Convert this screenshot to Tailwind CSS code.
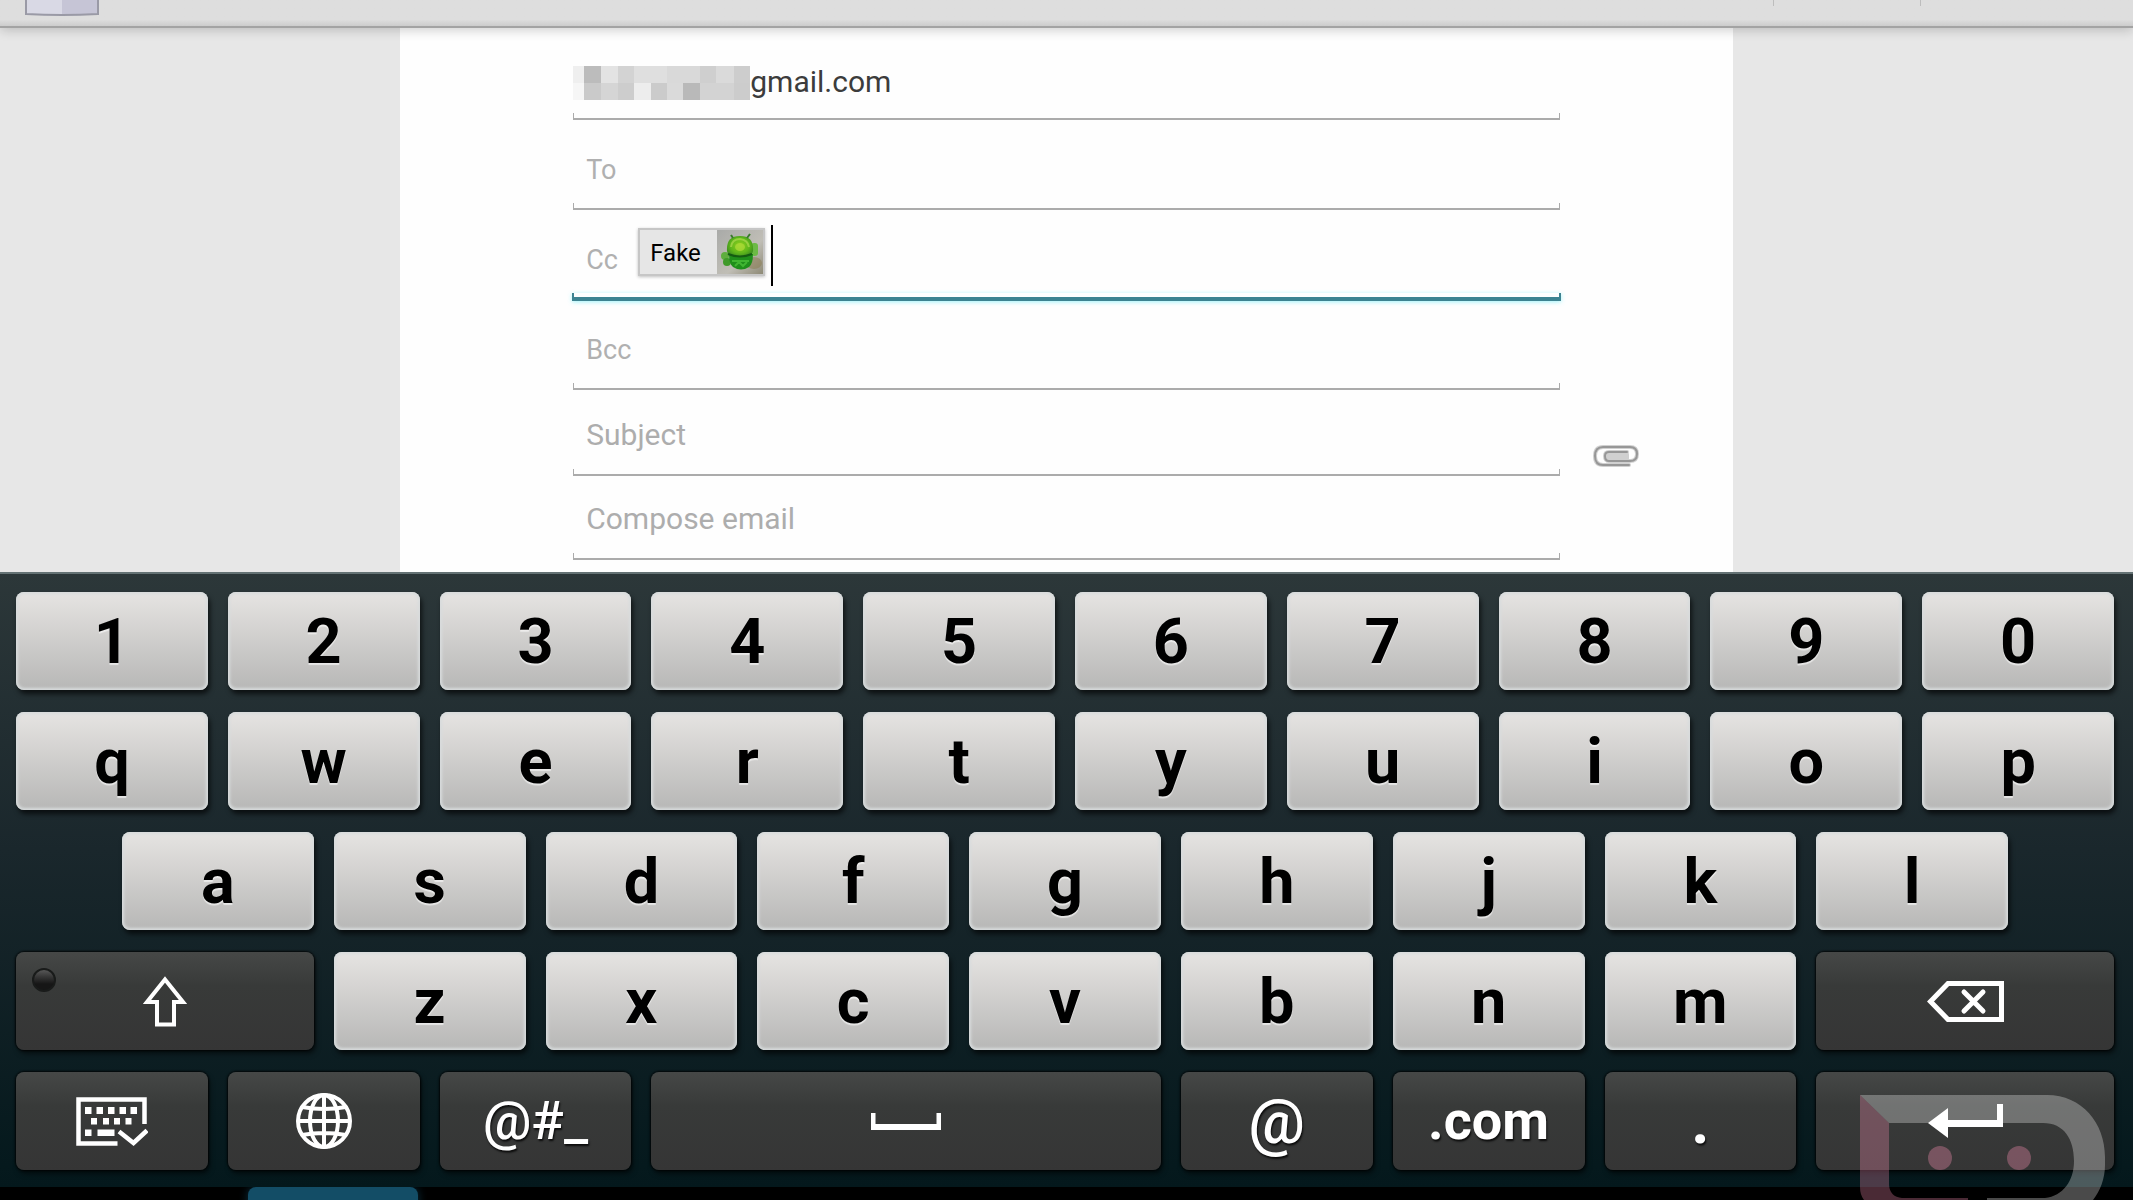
<!DOCTYPE html>
<html lang="en">
  <head>
    <meta charset="UTF-8" />
    <meta name="viewport" content="width=device-width, initial-scale=1.0" />
    <title>Compose</title>
    <script src="https://cdn.jsdelivr.net/npm/@tailwindcss/browser@4"></script>
  </head>
  <body class="relative flex min-h-screen flex-col overflow-hidden bg-black font-['Roboto','Liberation_Sans',sans-serif]">
    <!-- Action bar -->
    <header class="relative z-10 flex h-7 items-start justify-between border-b-2 border-[#a3a3a3] bg-linear-to-b from-[#dedede] from-75% to-[#cccccc] shadow-[0_2px_12px_rgba(0,0,0,0.2)]">
      <svg class="ml-6 h-4 w-19" viewBox="0 0 76 16" aria-hidden="true">
        <path d="M1 0H75V14Q38 17 1 14Z" fill="#d9d9e5" />
        <path d="M38 0H74V14Q56 15 38 15Z" fill="#c6c5d6" />
        <path d="M2 0V14Q38 16 74 14V0" fill="none" stroke="#9a9aa6" stroke-width="2" />
      </svg>
      <div class="mr-[212px] h-1.5 w-[148px] border-x border-[#bdbdbd]"></div>
    </header>

    <!-- Compose form -->
    <main class="bg-[#e7e7e7]">
      <form class="mx-auto w-5/8 bg-[#fefefe] pb-3">
        <div class="grid h-[92px] grid-cols-[13%_1fr_13%]">
          <div class="relative col-start-2 flex items-end pb-5">
            <svg class="h-[34px] w-[177px] shrink-0" viewBox="0 0 178 34" preserveAspectRatio="none" shape-rendering="crispEdges" aria-hidden="true">
              <rect width="11" height="17" fill="#efefef" />
              <rect x="11" width="17" height="17" fill="#bcbcbc" />
              <rect x="28" width="17" height="17" fill="#e3e3e3" />
              <rect x="45" width="16" height="17" fill="#d3d3d3" />
              <rect x="61" width="34" height="17" fill="#dfdfdf" />
              <rect x="95" width="33" height="17" fill="#d9d9d9" />
              <rect x="128" width="16" height="17" fill="#cfcfcf" />
              <rect x="144" width="18" height="17" fill="#dadada" />
              <rect x="162" width="16" height="17" fill="#cdcdcd" />
              <rect y="17" width="11" height="17" fill="#f6f6f6" />
              <rect x="11" y="17" width="17" height="17" fill="#cacaca" />
              <rect x="28" y="17" width="17" height="17" fill="#d5d5d5" />
              <rect x="45" y="17" width="16" height="17" fill="#cdcdcd" />
              <rect x="61" y="17" width="17" height="17" fill="#ededed" />
              <rect x="78" y="17" width="17" height="17" fill="#cbcbcb" />
              <rect x="95" y="17" width="16" height="17" fill="#dadada" />
              <rect x="111" y="17" width="17" height="17" fill="#b9b9b9" />
              <rect x="128" y="17" width="34" height="17" fill="#d3d3d3" />
              <rect x="162" y="17" width="16" height="17" fill="#cccccc" />
            </svg>
            <input type="text" aria-label="From" value="gmail.com" class="h-9 min-w-0 flex-1 pb-0.5 text-[30px] text-[#3c3c3c] outline-none" />
            <span class="absolute inset-x-0 bottom-0 h-[7px] border-x border-b-2 border-[#ababab]"></span>
          </div>
        </div>
        <div class="grid h-[90px] grid-cols-[13%_1fr_13%]">
          <div class="relative col-start-2 flex items-end gap-5 pb-6 pl-[13px]">
            <label for="to" class="text-[27px] leading-8 text-[#b0b0b0]">To</label>
            <input id="to" type="text" class="h-8 min-w-0 flex-1 text-[27px] outline-none" />
            <span class="absolute inset-x-0 bottom-0 h-[7px] border-x border-b-2 border-[#ababab]"></span>
          </div>
        </div>
        <div class="grid h-[90px] grid-cols-[13%_1fr_13%]">
          <div class="relative col-start-2 flex items-end pb-6 pl-[13px]">
            <label for="cc" class="w-[52px] text-[27px] leading-8 text-[#b0b0b0]">Cc</label>
            <div class="flex h-12 shrink-0 items-stretch border-2 border-[#c6c6c6] bg-[#e6e6e6] shadow-[0_1px_3px_rgba(0,0,0,0.25)]">
              <span class="w-[77px] pl-2.5 text-2xl leading-[47px] text-black">Fake</span>
              <svg class="w-[46px]" viewBox="0 0 46 44" aria-hidden="true">
                <defs>
                  <linearGradient id="wall" x1="0" y1="0" x2="1" y2="1">
                    <stop offset="0" stop-color="#a9aaa8" />
                    <stop offset="0.6" stop-color="#c0beb6" />
                    <stop offset="1" stop-color="#8e8a76" />
                  </linearGradient>
                  <radialGradient id="head" cx="0.5" cy="0.45" r="0.6">
                    <stop offset="0" stop-color="#8fd01f" />
                    <stop offset="0.6" stop-color="#5fb71b" />
                    <stop offset="1" stop-color="#37881f" />
                  </radialGradient>
                </defs>
                <rect width="46" height="44" fill="url(#wall)" />
                <ellipse cx="37" cy="33" rx="8" ry="6" fill="#8a7b50" opacity="0.5" />
                <rect x="4" y="22" width="8" height="8" rx="4" fill="#5fae3f" />
                <rect x="6" y="28" width="8" height="8" rx="4" fill="#3f9a2a" />
                <rect x="34" y="13" width="7" height="13" rx="3" fill="#6cba45" />
                <path d="M12 24H36Q36 34 32 37Q24 42 16 37Q12 34 12 24Z" fill="#1f8f1b" />
                <path d="M10 21Q9 6 23 6Q37 6 36 21Q35 27 23 27Q11 27 10 21Z" fill="url(#head)" />
                <path d="M16 8L14 5M30 8L33 4" stroke="#3a7d2c" stroke-width="2" />
                <path d="M11 24Q23 29 35 24" fill="none" stroke="#145c12" stroke-width="2" />
                <path d="M14 17Q15 9 23 9Q31 10 32 17" fill="none" stroke="#b9e05a" stroke-width="2" opacity="0.6" />
                <ellipse cx="23" cy="17" rx="5" ry="4" fill="#b0dc3a" opacity="0.7" />
                <path d="M15 31H32M18 36L22 32L26 36L30 32" fill="none" stroke="#4fc43c" stroke-width="2" opacity="0.7" />
              </svg>
            </div>
            <span class="-mb-2.5 ml-1.5 h-[61px] w-0.5 shrink-0 bg-black"></span>
            <input id="cc" type="text" class="h-8 min-w-0 flex-1 text-2xl outline-none" />
            <span class="absolute -inset-x-px -bottom-px h-2 border-x-2 border-b-4 border-[#3d8391] shadow-[0_1px_4px_rgba(120,240,250,0.7)]"></span>
          </div>
        </div>
        <div class="grid h-[90px] grid-cols-[13%_1fr_13%]">
          <div class="relative col-start-2 flex items-end gap-5 pb-6 pl-[13px]">
            <label for="bcc" class="text-[27px] leading-8 text-[#b0b0b0]">Bcc</label>
            <input id="bcc" type="text" class="h-8 min-w-0 flex-1 text-[27px] outline-none" />
            <span class="absolute inset-x-0 bottom-0 h-[7px] border-x border-b-2 border-[#ababab]"></span>
          </div>
        </div>
        <div class="grid h-[86px] grid-cols-[13%_1fr_13%] items-end">
          <div class="relative col-start-2 flex pb-6 pl-[13px]">
            <input type="text" aria-label="Subject" placeholder="Subject" class="h-9 min-w-0 flex-1 text-[30px] outline-none placeholder:text-[#adadad]" />
            <span class="absolute inset-x-0 bottom-0 h-[7px] border-x border-b-2 border-[#ababab]"></span>
          </div>
          <button type="button" aria-label="Attach file" class="justify-self-start pb-2 pl-8">
            <svg class="h-6 w-12" viewBox="0 0 48 24" fill="none" stroke-linecap="round">
              <rect x="13" y="8" width="24" height="9" rx="3" fill="#d0d0d0" />
              <path d="M37 21H11Q3 21 3 12Q3 3 11 3H38Q45 3 45 10Q45 17 38 17H17Q13 17 13 12Q13 8 17 8H35" stroke="#d0d0d0" stroke-width="4" />
              <path d="M37 21H11Q3 21 3 12Q3 3 11 3H38Q45 3 45 10Q45 17 38 17H17Q13 17 13 12Q13 8 17 8H35" stroke="#979797" stroke-width="2" />
            </svg>
          </button>
        </div>
        <div class="grid h-[84px] grid-cols-[13%_1fr_13%] items-end">
          <div class="relative col-start-2 flex pb-6 pl-[13px]">
            <input type="text" aria-label="Compose email" placeholder="Compose email" class="h-9 min-w-0 flex-1 text-[30px] outline-none placeholder:text-[#adadad]" />
            <span class="absolute inset-x-0 bottom-0 h-[7px] border-x border-b-2 border-[#ababab]"></span>
          </div>
        </div>
      </form>
    </main>

    <!-- On-screen keyboard -->
    <section id="keyboard" aria-label="Keyboard" class="grid grid-cols-20 gap-x-5 gap-y-[22px] border-t-2 border-[#647274] bg-linear-to-b from-[#2c3739] via-[#1a272c] via-45% to-[#04181c] pt-[18px] pr-[19px] pb-[17px] pl-4"></section>

    <!-- System bar -->
    <footer class="h-[13px] overflow-hidden">
      <div class="ml-[248px] h-10 w-[170px] rounded-t-lg bg-[#134d66] shadow-[0_0_10px_rgba(19,77,102,0.6)]"></div>
    </footer>

    <!-- Watermark -->
    <svg class="pointer-events-none absolute right-7 bottom-0 h-[105px] w-[245px]" viewBox="0 0 245 105" fill-opacity="0.29" aria-hidden="true">
      <path fill="#ffffff" d="M0 0H187C222 0 245 28 245 62V70C245 84 240 96 233 105H127V103H185C203 101 214 86 214 66C214 44 204 28 183 28H29Z" />
      <path fill="#ff92b5" d="M0 0L29 28V90Q30 102 42 103H108V105H4Q0 100 0 92Z" />
      <circle cx="80" cy="63" r="12" fill="#ff92b5" fill-opacity="0.33" />
      <circle cx="159" cy="63" r="12" fill="#ff92b5" fill-opacity="0.33" />
    </svg>

    <script>
      const lightKey =
        "flex h-[98px] items-center justify-center rounded-lg bg-linear-to-b from-[#e6e4e2] to-[#b7b7b6] text-[63px] leading-none font-bold text-black shadow-[inset_0_0_3px_2px_#d8dcdd,2px_4px_5px_rgba(0,0,0,0.65)] text-shadow-[0_2px_1px_rgba(255,255,255,0.6)]";
      const darkKey =
        "relative flex h-[98px] items-center justify-center rounded-lg bg-linear-to-b from-[#464847] via-[#383a39] via-35% to-[#353535] leading-none text-white shadow-[0_0_2px_1px_rgba(0,0,0,0.8),2px_4px_5px_rgba(0,0,0,0.5)] text-shadow-[1px_2px_2px_rgba(0,0,0,0.8)]";

      const icons = {
        shift: `<svg class="h-[51px] w-11" viewBox="0 0 44 51" fill="none" stroke="#fff" stroke-width="4"><path d="M22 3.5L40 26H31V48.5H14V26H4Z"/></svg>
          <span class="absolute top-4 left-4 size-6 rounded-full border-2 border-[#191b1a] bg-linear-to-b from-[#585858] to-[#161616] to-70%"></span>`,
        hide: `<svg class="h-[49px] w-[72px]" viewBox="0 0 72 49" fill="none" stroke="#fff" stroke-width="4.5"><path d="M68.5 27V2.5H2.5V46.5H41.5M43 34.5L57.5 46L71 33.5"/>
          <path stroke="none" fill="#fff" d="M9 10h6.5v7H9zM20.5 10H27v7h-6.5zM32 10h6.5v7H32zM43.5 10H50v7h-6.5zM54.5 10H61v7h-6.5zM15 21h6v6.5h-6zM27 21h6v6.5h-6zM38 21h6v6.5h-6zM49.5 21h6v6.5h-6zM9 32.5h6.5V39H9zM21.5 32.5h17V39h-17z"/></svg>`,
        globe: `<svg class="size-14" viewBox="0 0 56 56" fill="none" stroke="#fff" stroke-width="4"><circle cx="28" cy="28" r="26"/><ellipse cx="28" cy="28" rx="14" ry="26"/><path d="M28 2V54M2 28H54M6 14Q28 18 50 14M6 42Q28 38 50 42"/></svg>`,
        space: `<svg class="h-[17px] w-[70px]" viewBox="0 0 70 17" fill="#fff"><path d="M0 0H4.5V11H65.5V0H70V17H0Z"/></svg>`,
        back: `<svg class="h-[41px] w-[77px]" viewBox="0 0 77 41" fill="none" stroke="#fff" stroke-width="5"><path d="M74.5 2.5H21L3.5 20.5L21 38.5H74.5Z"/><path d="M37 11L56 30M56 11L37 30" stroke-linecap="round"/></svg>`,
        enter: `<svg class="h-[34px] w-[75px]" viewBox="0 0 75 34" fill="#fff"><path d="M0 19L20 4V16H69V0H75V23H20V34Z"/></svg>`,
      };

      const keyboard = document.getElementById("keyboard");

      function addKey(html, classes, label) {
        const key = document.createElement("button");
        key.type = "button";
        key.className = classes;
        key.innerHTML = html;
        if (label) key.setAttribute("aria-label", label);
        keyboard.appendChild(key);
      }

      for (const c of "1234567890qwertyuiop") addKey(c, lightKey + " col-span-2");
      // home row is indented by half a key
      addKey("a", lightKey + " col-start-2 col-end-4");
      for (const c of "sdfghjkl") addKey(c, lightKey + " col-span-2");

      addKey(icons.shift, darkKey + " col-start-1 col-end-4", "Shift");
      for (const c of "zxcvbnm") addKey(c, lightKey + " col-span-2");
      addKey(icons.back, darkKey + " col-span-3", "Backspace");

      addKey(icons.hide, darkKey + " col-span-2", "Hide keyboard");
      addKey(icons.globe, darkKey + " col-span-2", "Language");
      addKey("@#_", darkKey + " col-span-2 text-[54px] font-medium");
      addKey(icons.space, darkKey + " col-span-5", "Space");
      addKey("@", darkKey + " col-span-2 text-[63px] font-medium");
      addKey(".com", darkKey + " col-span-2 text-[54px] font-bold");
      addKey(".", darkKey + " col-span-2 text-[63px] font-bold");
      addKey(icons.enter, darkKey + " col-span-3", "Enter");
    </script>
  </body>
</html>
